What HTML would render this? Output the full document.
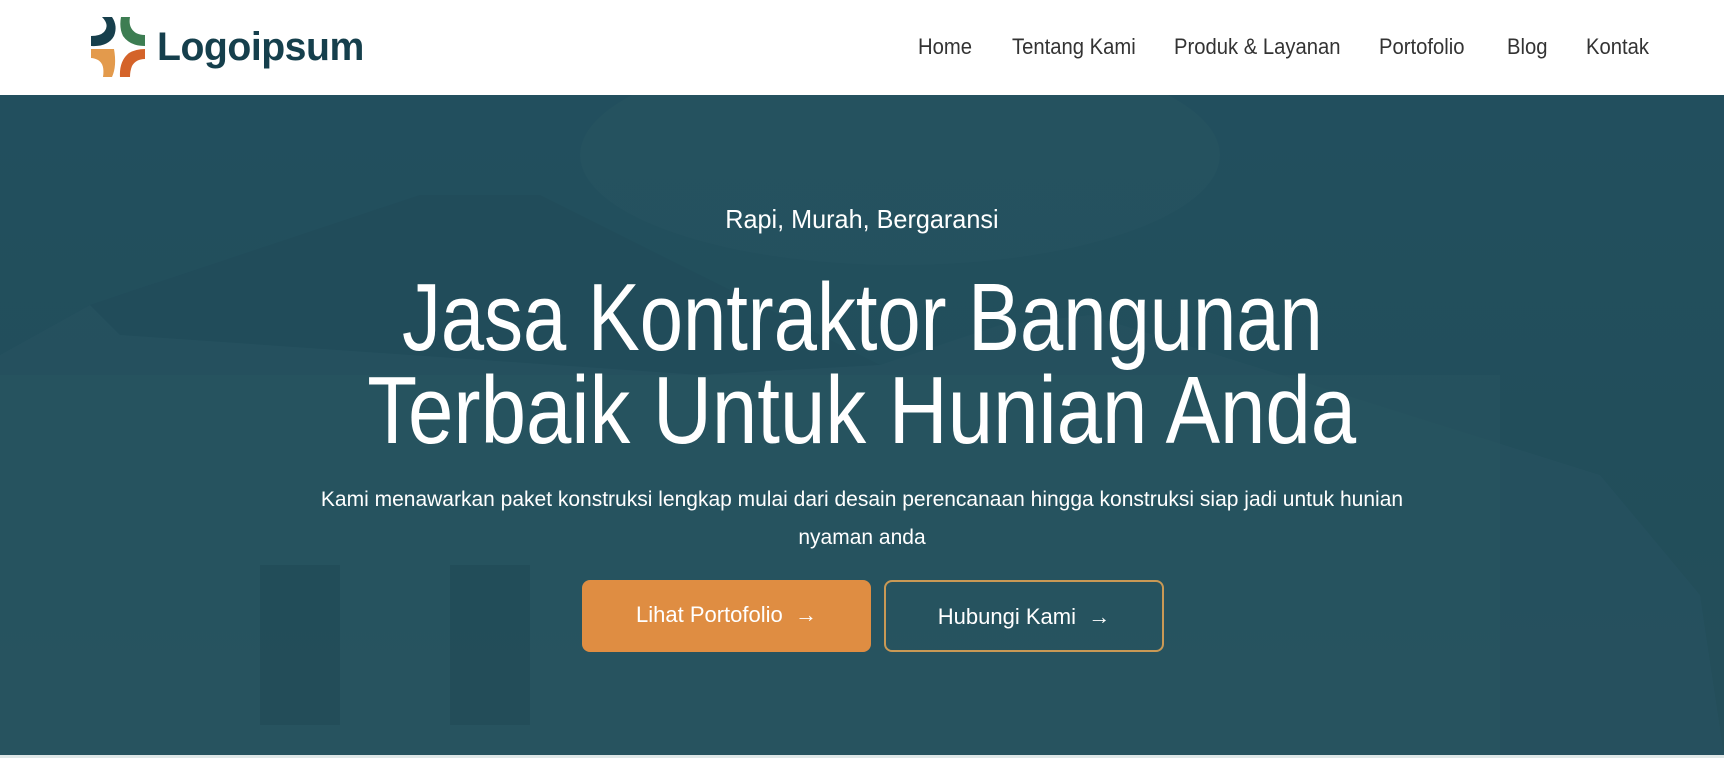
<!DOCTYPE html>
<html><head><meta charset="utf-8"><style>
*{margin:0;padding:0;box-sizing:border-box}
body{width:1724px;height:758px;overflow:hidden;font-family:"Liberation Sans",sans-serif;background:#fff;position:relative}
.hdr{position:absolute;left:0;top:0;width:1724px;height:95px;background:#fff}
.logo{position:absolute;left:157px;top:25px;font-size:40px;font-weight:bold;color:#153f4c;letter-spacing:-0.5px;transform:scaleX(.98);transform-origin:left top}
.nav span{position:absolute;top:34px;font-size:22px;color:#333;white-space:nowrap;transform:scaleX(.92);transform-origin:left top}
.hero{position:absolute;left:0;top:95px;width:1724px;height:660px;overflow:hidden;
background:linear-gradient(180deg,#24515f 0%,#234f5c 50%,#274f5a 100%)}
.foot{position:absolute;left:0;top:755px;width:1724px;height:3px;background:#dfe7e7}
.c{position:absolute;left:0;width:1724px;text-align:center;color:#fff;white-space:nowrap}
.c span{display:inline-block}
.btn{position:absolute;top:580px;height:72px;border-radius:8px;color:#fff;font-size:22px;text-align:center;line-height:70px}
.btn b{font-weight:normal;font-size:22px}
</style></head><body>
<div class="hdr">
<svg style="position:absolute;left:90px;top:16px" width="56" height="62" viewBox="0 0 56 62">
<path d="M12 1 Q20 9 14 16 Q10 20 1 20 L1 30 Q18 31 24 20 Q28 10 22 1Z" fill="#173f4c"/>
<path d="M31 1 L40 1 Q38 12 46 17 Q50 19 55 19 L55 30 Q40 30 33 20 Q29 12 31 1Z" fill="#3d7d52"/>
<path d="M1 33 L24 33 Q27 50 22 61 L13 61 Q15 48 8 44 Q4 42 1 42Z" fill="#e39a4c"/>
<path d="M55 33 L55 43 Q46 43 42 50 Q40 55 40 61 L30 61 Q29 45 39 37 Q46 33 55 33Z" fill="#d4632a"/>
</svg>
<div class="logo">Logoipsum</div>
<div class="nav">
<span style="left:918px">Home</span>
<span style="left:1012px">Tentang Kami</span>
<span style="left:1174px">Produk &amp; Layanan</span>
<span style="left:1379px">Portofolio</span>
<span style="left:1507px">Blog</span>
<span style="left:1586px">Kontak</span>
</div>
</div>
<div class="hero">
<svg width="1724" height="660" style="position:absolute;left:0;top:0" viewBox="0 0 1724 660">
<ellipse cx="900" cy="60" rx="320" ry="110" fill="#3a6270" opacity=".18"/>
<polygon points="90,210 420,100 540,100 880,270 1000,230 1090,220 1600,380 1700,500 1724,660 0,660 0,260" fill="#2a5563" opacity=".6"/>
<polygon points="90,210 420,100 540,100 880,270 700,280 120,240" fill="#1c4654" opacity=".4"/>
<rect x="0" y="280" width="1500" height="380" fill="#2d5864" opacity=".45"/>
<rect x="260" y="470" width="80" height="160" fill="#1a3e4a" opacity=".3"/>
<rect x="450" y="470" width="80" height="160" fill="#1a3e4a" opacity=".3"/>
<rect x="0" y="0" width="1724" height="660" fill="#1f4d5c" opacity=".2"/>
</svg>
</div>
<div class="c" style="top:204px;font-size:26px"><span style="transform:scaleX(.97)">Rapi, Murah, Bergaransi</span></div>
<div class="c" style="top:270px;font-size:96px;line-height:96px"><span style="transform:scaleX(.81)">Jasa Kontraktor Bangunan</span></div>
<div class="c" style="top:363px;font-size:96px;line-height:96px"><span style="transform:scaleX(.85)">Terbaik Untuk Hunian Anda</span></div>
<div class="c" style="top:488px;font-size:21px"><span>Kami menawarkan paket konstruksi lengkap mulai dari desain perencanaan hingga konstruksi siap jadi untuk hunian</span></div>
<div class="c" style="top:526px;font-size:21px"><span>nyaman anda</span></div>
<div class="btn" style="left:582px;width:289px;background:#df8d42"><span>Lihat Portofolio &nbsp;<b>→</b></span></div>
<div class="btn" style="left:884px;width:280px;border:2px solid #c99955"><span>Hubungi Kami &nbsp;<b>→</b></span></div>
<div class="foot"></div>
</body></html>
